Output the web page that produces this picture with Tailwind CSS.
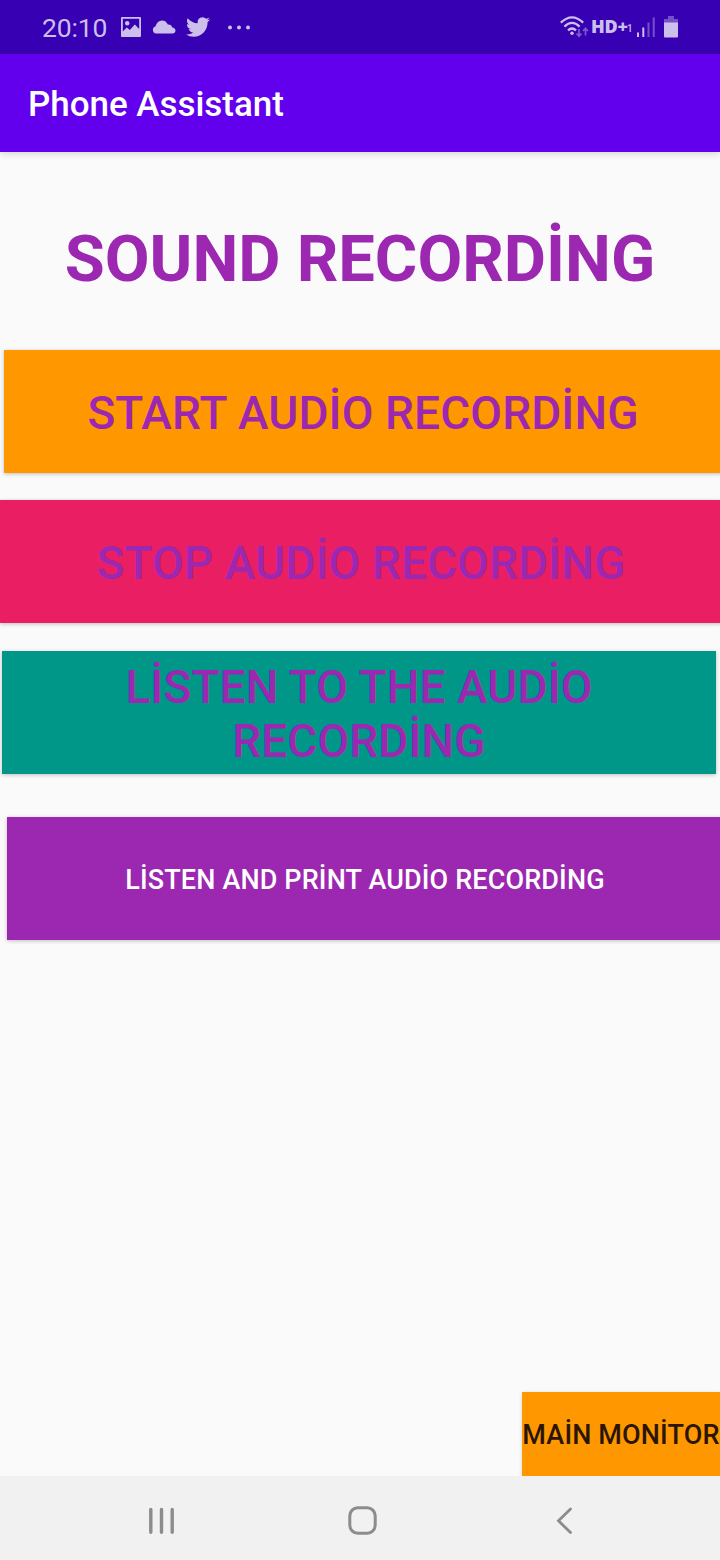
<!DOCTYPE html>
<html lang="en">
<head>
  <meta charset="UTF-8">
  <meta name="viewport" content="width=device-width, initial-scale=1.0">
  <title>Phone Assistant</title>
  <script src="https://cdn.jsdelivr.net/npm/@tailwindcss/browser@4"></script>
</head>
<body class="bg-[#fafafa] font-['Roboto',sans-serif] overflow-hidden">
  <div class="w-[720px] h-[1560px] flex flex-col overflow-hidden">

    <!-- Status bar -->
    <div class="h-[54px] shrink-0 bg-[#3700b3] text-[#cdbfec] flex items-center justify-between pl-[41px] pr-[41px]">
      <div class="flex items-center">
        <span class="text-[26.5px] leading-[54px] w-[79px] pl-px pt-[2px] tracking-[-0.15px]">20:10</span>
        <svg class="w-[22px] h-[22px]" viewBox="0 0 22 22" fill="currentColor">
          <path fill-rule="evenodd" d="M2 1h18a1 1 0 0 1 1 1v18a1 1 0 0 1-1 1H2a1 1 0 0 1-1-1V2a1 1 0 0 1 1-1zM2.800 2.800V15.500l4-4 3 2.600 5-5.600 4.400 4.600V2.800z"/>
          <circle cx="7.200" cy="7.200" r="2.200"/>
        </svg>
        <svg class="ml-[10px] w-6 h-[14px]" viewBox="0 0 24 14" fill="currentColor">
          <path d="M4 13.500a3.600 3.600 0 0 1-.6-7C4.500 2.600 7 .5 10 .5c2.800 0 4.800 1.600 5.800 4.100 2.300-.3 4 1 4.400 3 2 .2 3.300 1.400 3.300 3 0 1.800-1.300 2.900-3 2.900z"/>
        </svg>
        <svg class="ml-[10px] w-6 h-6" viewBox="0 0 24 24" fill="currentColor">
          <path d="M23.950 4.570a10 10 0 0 1-2.820.77 4.960 4.960 0 0 0 2.160-2.720c-.95.55-2 .95-3.130 1.180a4.920 4.920 0 0 0-8.380 4.480C7.690 8.090 4.070 6.130 1.640 3.160a4.820 4.820 0 0 0-.67 2.480c0 1.710.87 3.210 2.190 4.100a4.900 4.900 0 0 1-2.230-.62v.06a4.920 4.920 0 0 0 3.950 4.830 5 5 0 0 1-2.210.08 4.940 4.940 0 0 0 4.600 3.420A9.870 9.870 0 0 1 0 19.540a14 14 0 0 0 7.550 2.210c9.050 0 14-7.500 14-13.990 0-.21 0-.42-.02-.63a9.940 9.940 0 0 0 2.460-2.550z"/>
        </svg>
        <svg class="ml-[17px] w-6 h-[5px]" viewBox="0 0 24 5" fill="currentColor">
          <circle cx="3" cy="2.500" r="2"/><circle cx="12" cy="2.500" r="2"/><circle cx="21" cy="2.500" r="2"/>
        </svg>
      </div>
      <div class="flex items-center">
        <svg class="w-[29px] h-6" viewBox="0 0 29 24" fill="none" stroke="currentColor" stroke-width="2.200">
          <path d="M.8 7.600Q12 -3 23.200 7.600M4.400 11.600Q12 4.200 19.600 11.600M8 15.400Q12 11.600 16 15.400"/>
          <circle cx="12" cy="18.300" r="1.700" fill="currentColor" stroke="none"/>
          <path d="M19 14v7M16.500 18.500l2.500 2.700 2.500-2.700M25.500 20.500v-7M23 16l2.500-2.700L28 16" stroke="#7c58cf" stroke-width="1.700"/>
        </svg>
        <span class="ml-[2px] w-[36px] pb-[2px] font-['Open_Sans',sans-serif] font-extrabold text-[18px] leading-6 tracking-[-0.2px]">HD+</span>
        <span class="w-[8px] text-[10px] leading-3 pt-[4px] font-medium">1</span>
        <svg class="ml-[1px] w-5 h-[22px]" viewBox="0 0 20 22" fill="currentColor">
          <rect x="1" y="16.500" width="2" height="4.500"/>
          <rect x="6.300" y="11.500" width="2" height="9.500"/>
          <rect x="11.500" y="6.500" width="2" height="14.500" fill="#7650cc"/>
          <rect x="16.700" y="1.500" width="2" height="19.500" fill="#7650cc"/>
        </svg>
        <svg class="ml-[7px] w-4 h-[22px]" viewBox="0 0 16 22">
          <path d="M5 0h6v3h4v4H1V3h4z" fill="#7650cc"/>
          <path d="M1 6.500h14v14a1 1 0 0 1-1 1H2a1 1 0 0 1-1-1z" fill="currentColor"/>
        </svg>
      </div>
    </div>

    <!-- App bar -->
    <header class="h-[98px] shrink-0 bg-[#6200ee] flex items-center pl-7 pt-[2px] shadow-[0_2px_7px_rgba(0,0,0,0.14)]">
      <h1 class="text-white text-[35px] leading-none font-medium tracking-[-0.04px]">Phone Assistant</h1>
    </header>

    <main class="flex-1 flex flex-col min-h-0">
      <h2 class="mt-[69px] h-[77px] text-center whitespace-nowrap text-[65px] leading-[77px] font-bold text-[#9c27b0]">SOUND RECORDİNG</h2>

      <button class="mt-[52px] ml-1 w-[718px] h-[123px] shrink-0 pt-[3px] bg-[#ff9800] text-[#9c27b0] text-[46px] leading-[54px] tracking-[0.1px] font-medium shadow-[0_1px_4px_rgba(0,0,0,0.24)]">START AUDİO RECORDİNG</button>
      <button class="mt-[27px] w-[722px] h-[123px] shrink-0 pt-[3px] bg-[#e91e63] text-[#9c27b0] text-[46px] leading-[54px] tracking-[0.1px] font-medium shadow-[0_1px_4px_rgba(0,0,0,0.24)]">STOP AUDİO RECORDİNG</button>
      <button class="mt-7 ml-[2px] w-[714px] h-[123px] shrink-0 pt-[3px] bg-[#009688] text-[#9c27b0] text-[46px] leading-[54px] tracking-[0.1px] font-medium shadow-[0_1px_4px_rgba(0,0,0,0.24)]">LİSTEN TO THE AUDİO<br>RECORDİNG</button>
      <button class="mt-[43px] ml-[7px] w-[716px] h-[123px] shrink-0 pt-[2px] bg-[#9c27b0] text-white text-[27px] leading-8 tracking-[0.14px] font-medium shadow-[0_1px_4px_rgba(0,0,0,0.24)]">LİSTEN AND PRİNT AUDİO RECORDİNG</button>

      <button class="mt-auto self-end w-[198px] h-[84px] shrink-0 pt-[2px] bg-[#ff9800] text-[#2a1500] text-[27px] leading-8 tracking-[0.14px] font-medium whitespace-nowrap shadow-[0_1px_4px_rgba(0,0,0,0.15)]">MAİN MONİTOR</button>
    </main>

    <!-- Navigation bar -->
    <nav class="relative h-[84px] shrink-0 bg-[#f1f1f1] flex items-center justify-between pl-[146px] pr-[141px] pt-[5px] text-[#8c8c8c]">
      <svg class="w-[30px] h-[30px]" viewBox="0 0 30 30" fill="none" stroke="currentColor" stroke-width="3.400" stroke-linecap="round">
        <path d="M4.800 3.500v22.800M15.500 3.500v22.800M26.200 3.500v22.800"/>
      </svg>
      <svg class="w-[30px] h-[30px]" viewBox="0 0 30 30" fill="none" stroke="currentColor" stroke-width="3">
        <rect x="1.800" y="1.800" width="25.400" height="25.400" rx="8"/>
      </svg>
      <svg class="w-[30px] h-[30px]" viewBox="0 0 30 30" fill="none" stroke="currentColor" stroke-width="2.800" stroke-linecap="round">
        <path d="M21.500 3L9.500 14.800l12 11.700"/>
      </svg>
    </nav>
  </div>
</body>
</html>
